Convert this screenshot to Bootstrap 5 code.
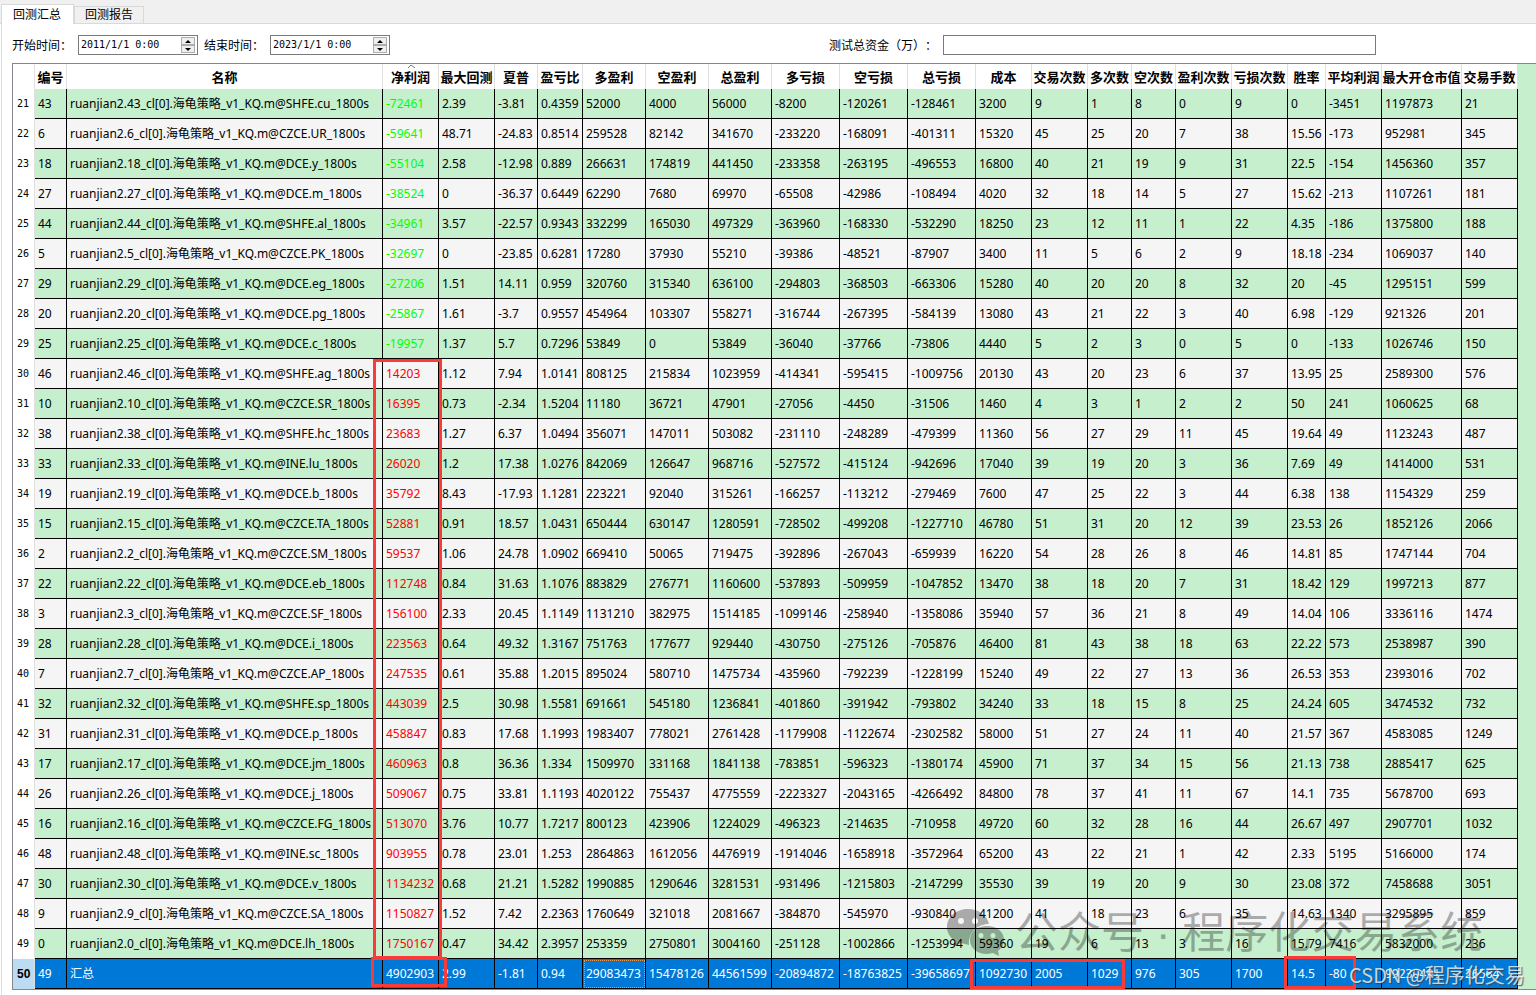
<!DOCTYPE html>
<html lang="zh-CN">
<head>
<meta charset="utf-8">
<meta name="viewport" content="width=device-width, initial-scale=1">
<title>回测汇总</title>
<link href="https://cdn.jsdelivr.net/npm/bootstrap@5.3.0/dist/css/bootstrap.min.css" rel="stylesheet">
<style>
body{background:#fff;color:#000;font:12px/18px "Liberation Sans","Noto Sans CJK SC",sans-serif}
.tabbar{background:#f0f0f0;border-bottom:1px solid #d9d9d9;height:24px;padding-left:1px}
.tabbar .nav-link{border:1px solid #d9d9d9;border-bottom:0;border-radius:0;background:#f0f0f0;color:#000;padding:0 10px;height:17px;line-height:17px;font-size:12px;margin:0}
.tabbar .nav-link.active{background:#fff;color:#000;height:20px;line-height:20px;padding:0 12px 0 11px;margin-bottom:-1px}
.pane{border-left:1px solid #dcdcdc;margin-left:1px;padding:11px 0 5px 10px}
.filters{height:20px;margin-bottom:8px;gap:6px}
.filters label{white-space:nowrap;padding-top:2px;text-spacing-trim:space-all}
.spin{width:120px;height:20px;border:1px solid #7a7a7a;background:#fff}
.spin input{border:0;outline:0;padding:0 0 0 2px;width:102px;font:10px/16px "DejaVu Sans Mono",monospace;color:#000;background:none}
.spin .steps{width:15px;padding:1px 1px 1px 0}
.spin button{border:1px solid #adadad;background:#efefef;padding:0;height:8px;width:14px;line-height:0;display:flex;align-items:center;justify-content:center}
.capital{width:433px;height:20px;border:1px solid #7a7a7a;padding:0 4px;font-size:12px;margin-right:160px}
.sheet{border:1px solid #828790;border-right:0;background:#c6efce;font-family:"Noto Sans","Noto Sans CJK SC",sans-serif}
.sheet table{table-layout:fixed;width:1505px;border-collapse:separate;border-spacing:0;background:#fff}
.sheet th,.sheet td{overflow:hidden;white-space:nowrap;padding:0}
.sheet thead th{height:25px;border-right:1px solid #e0e0e0;font:bold 13px/25px "Noto Sans CJK SC",sans-serif;text-align:center}
.sheet tbody td{height:30px;line-height:29px;border-right:1px solid #000;border-bottom:1px solid #000;padding-left:3px;background:#f5f5f5}
.sheet tbody tr:nth-child(odd) td{background:#c6efce}
.sheet tbody th{font:10px/30px "DejaVu Sans Mono",monospace;text-align:left;padding-left:4px;border-right:1px solid #e0e0e0}
.sheet .loss{color:#0f0}
.sheet .gain{color:#f00}
.sheet tbody tr.total td{background:#0078d7;color:#fff}
.sheet tbody tr.total th{background:#bcdcf4;font:bold 12px/30px "Liberation Sans",sans-serif}
.sheet td.focused{outline:1px dotted #e39b57;outline-offset:-2px}
.sorted svg{position:absolute;top:0;left:50%;margin-left:-4px}
.frame-mark{position:absolute;border:3px solid #fb3b37;pointer-events:none}
.m1{left:360px;top:295px;width:69px;height:600px}
.m2{left:358px;top:893px;width:76px;height:30px}
.m3{left:957px;top:895px;width:155px;height:30px}
.m4{left:1271px;top:892px;width:72px;height:33px}
.wm{position:absolute;left:934px;top:839px;opacity:.3;color:#000;pointer-events:none;font:43px/60px "Liberation Sans","Noto Sans CJK SC",sans-serif;white-space:nowrap;gap:10px}
.csdn{position:absolute;left:1336px;top:896px;font:20px/30px "Noto Sans CJK SC",sans-serif;color:rgba(255,255,255,.75);text-shadow:1px 1px 1px rgba(60,60,60,.8);white-space:nowrap;pointer-events:none}
</style>
</head>
<body>
<nav class="tabbar nav d-flex align-items-end" aria-label="回测">
<a class="nav-link active" href="#summary">回测汇总</a><a class="nav-link" href="#report">回测报告</a>
</nav>
<main class="pane" id="summary">
<form class="filters d-flex align-items-center">
<label for="from">开始时间：</label>
<div class="spin d-flex"><input id="from" type="text" value="2011/1/1 0:00"><span class="steps"><button type="button" aria-label="增加"><svg width="6" height="3"><path d="M0 3L3 0L6 3z"/></svg></button><button type="button" aria-label="减少"><svg width="6" height="3"><path d="M0 0L3 3L6 0z"/></svg></button></span></div>
<label for="to">结束时间：</label>
<div class="spin d-flex"><input id="to" type="text" value="2023/1/1 0:00"><span class="steps"><button type="button" aria-label="增加"><svg width="6" height="3"><path d="M0 3L3 0L6 3z"/></svg></button><button type="button" aria-label="减少"><svg width="6" height="3"><path d="M0 0L3 3L6 0z"/></svg></button></span></div>
<label for="cap" class="ms-auto">测试总资金（万）：</label>
<input id="cap" class="capital" type="text">
</form>
<div class="sheet position-relative">
<table>
<colgroup id="cols"></colgroup>
<thead><tr id="head"></tr></thead>
<tbody id="rows"></tbody>
</table>
<div class="wm d-flex align-items-center"><svg width="58" height="48" viewBox="0 0 58 48"><path fill-rule="evenodd" d="M21 0C9 0 0 8 0 18c0 6 3 10 8 14l-2 6 8-4 8 2C21 24 30 15 42 15C40 6 31 0 21 0zM14 9a3 3 0 1 1 0 6a3 3 0 0 1 0-6zM28 9a3 3 0 1 1 0 6a3 3 0 0 1 0-6z"/><path fill-rule="evenodd" d="M40 17c-10 0-17 6-17 14s7 14 17 14l6-1 6 3-1-5c4-3 6-7 6-11c0-8-7-14-17-14zM34 24a2 2 0 1 1 0 5a2 2 0 0 1 0-5zM46 24a2 2 0 1 1 0 5a2 2 0 0 1 0-5z"/></svg><span>公众号 · 程序化交易系统</span></div>
<div class="frame-mark m1"></div><div class="frame-mark m2"></div><div class="frame-mark m3"></div><div class="frame-mark m4"></div>
<div class="csdn">CSDN @程序化交易</div>
</div>
</main>
<script src="https://cdn.jsdelivr.net/npm/bootstrap@5.3.0/dist/js/bootstrap.bundle.min.js"></script>
<script>
const columns=[["",22],["编号",32],["名称",316],["净利润",56],["最大回测",56],["夏普",43],["盈亏比",45],["多盈利",63],["空盈利",63],["总盈利",63],["多亏损",68],["空亏损",68],["总亏损",68],["成本",56],["交易次数",56],["多次数",44],["空次数",44],["盈利次数",56],["亏损次数",56],["胜率",38],["平均利润",56],["最大开仓市值",80],["交易手数",56]];
const data=`43 SHFE.cu -72461 2.39 -3.81 0.4359 52000 4000 56000 -8200 -120261 -128461 3200 9 1 8 0 9 0 -3451 1197873 21
6 CZCE.UR -59641 48.71 -24.83 0.8514 259528 82142 341670 -233220 -168091 -401311 15320 45 25 20 7 38 15.56 -173 952981 345
18 DCE.y -55104 2.58 -12.98 0.889 266631 174819 441450 -233358 -263195 -496553 16800 40 21 19 9 31 22.5 -154 1456360 357
27 DCE.m -38524 0 -36.37 0.6449 62290 7680 69970 -65508 -42986 -108494 4020 32 18 14 5 27 15.62 -213 1107261 181
44 SHFE.al -34961 3.57 -22.57 0.9343 332299 165030 497329 -363960 -168330 -532290 18250 23 12 11 1 22 4.35 -186 1375800 188
5 CZCE.PK -32697 0 -23.85 0.6281 17280 37930 55210 -39386 -48521 -87907 3400 11 5 6 2 9 18.18 -234 1069037 140
29 DCE.eg -27206 1.51 14.11 0.959 320760 315340 636100 -294803 -368503 -663306 15280 40 20 20 8 32 20 -45 1295151 599
20 DCE.pg -25867 1.61 -3.7 0.9557 454964 103307 558271 -316744 -267395 -584139 13080 43 21 22 3 40 6.98 -129 921326 201
25 DCE.c -19957 1.37 5.7 0.7296 53849 0 53849 -36040 -37766 -73806 4440 5 2 3 0 5 0 -133 1026746 150
46 SHFE.ag 14203 1.12 7.94 1.0141 808125 215834 1023959 -414341 -595415 -1009756 20130 43 20 23 6 37 13.95 25 2589300 576
10 CZCE.SR 16395 0.73 -2.34 1.5204 11180 36721 47901 -27056 -4450 -31506 1460 4 3 1 2 2 50 241 1060625 68
38 SHFE.hc 23683 1.27 6.37 1.0494 356071 147011 503082 -231110 -248289 -479399 11360 56 27 29 11 45 19.64 49 1123243 487
33 INE.lu 26020 1.2 17.38 1.0276 842069 126647 968716 -527572 -415124 -942696 17040 39 19 20 3 36 7.69 49 1414000 531
19 DCE.b 35792 8.43 -17.93 1.1281 223221 92040 315261 -166257 -113212 -279469 7600 47 25 22 3 44 6.38 138 1154329 259
15 CZCE.TA 52881 0.91 18.57 1.0431 650444 630147 1280591 -728502 -499208 -1227710 46780 51 31 20 12 39 23.53 26 1852126 2066
2 CZCE.SM 59537 1.06 24.78 1.0902 669410 50065 719475 -392896 -267043 -659939 16220 54 28 26 8 46 14.81 85 1747144 704
22 DCE.eb 112748 0.84 31.63 1.1076 883829 276771 1160600 -537893 -509959 -1047852 13470 38 18 20 7 31 18.42 129 1997213 877
3 CZCE.SF 156100 2.33 20.45 1.1149 1131210 382975 1514185 -1099146 -258940 -1358086 35940 57 36 21 8 49 14.04 106 3336116 1474
28 DCE.i 223563 0.64 49.32 1.3167 751763 177677 929440 -430750 -275126 -705876 46400 81 43 38 18 63 22.22 573 2538987 390
7 CZCE.AP 247535 0.61 35.88 1.2015 895024 580710 1475734 -435960 -792239 -1228199 15240 49 22 27 13 36 26.53 353 2393016 702
32 SHFE.sp 443039 2.5 30.98 1.5581 691661 545180 1236841 -401860 -391942 -793802 34240 33 18 15 8 25 24.24 605 3474532 732
31 DCE.p 458847 0.83 17.68 1.1993 1983407 778021 2761428 -1179908 -1122674 -2302582 58000 51 27 24 11 40 21.57 367 4583085 1249
17 DCE.jm 460963 0.8 36.36 1.334 1509970 331168 1841138 -783851 -596323 -1380174 45900 71 37 34 15 56 21.13 738 2885417 625
26 DCE.j 509067 0.75 33.81 1.1193 4020122 755437 4775559 -2223327 -2043165 -4266492 84800 78 37 41 11 67 14.1 735 5678700 693
16 CZCE.FG 513070 3.76 10.77 1.7217 800123 423906 1224029 -496323 -214635 -710958 49720 60 32 28 16 44 26.67 497 2907701 1032
48 INE.sc 903955 0.78 23.01 1.253 2864863 1612056 4476919 -1914046 -1658918 -3572964 65200 43 22 21 1 42 2.33 5195 5166000 174
30 DCE.v 1134232 0.68 21.21 1.5282 1990885 1290646 3281531 -931496 -1215803 -2147299 35530 39 19 20 9 30 23.08 372 7458688 3051
9 CZCE.SA 1150827 1.52 7.42 2.2363 1760649 321018 2081667 -384870 -545970 -930840 41200 41 18 23 6 35 14.63 1340 3295895 859
0 DCE.lh 1750167 0.47 34.42 2.3957 253359 2750801 3004160 -251128 -1002866 -1253994 59360 19 6 13 3 16 15.79 7416 5832000 236
49 汇总 4902903 2.99 -1.81 0.94 29083473 15478126 44561599 -20894872 -18763825 -39658697 1092730 2005 1029 976 305 1700 14.5 -80 99230491 26564`.split("\n").map(r=>r.split(" "));
const arrow='<svg width="9" height="5"><path d="M1 4L4 1L8 4" fill="none" stroke="#777"/></svg>';
document.getElementById("cols").innerHTML=columns.map(c=>`<col style="width:${c[1]}px">`).join("");
document.getElementById("head").innerHTML=columns.map(c=>`<th scope="col"${c[0]==="净利润"?' class="sorted position-relative"':""}>${c[0]}${c[0]==="净利润"?arrow:""}</th>`).join("");
document.getElementById("rows").innerHTML=data.map((r,i)=>{
const total=i===data.length-1;
return `<tr${total?' class="total"':""}><th scope="row">${i+21}</th>`+r.map((v,k)=>{
let cls="";
if(k===1&&!total)v=`ruanjian2.${r[0]}_cl[0].海龟策略_v1_KQ.m@${v}_1800s`;
if(k===2&&!total)cls=v<0?"loss":"gain";
if(total&&k===6)cls="focused";
return `<td${cls?` class="${cls}"`:""}>${v}</td>`}).join("")+"</tr>"}).join("");
</script>
</body>
</html>
